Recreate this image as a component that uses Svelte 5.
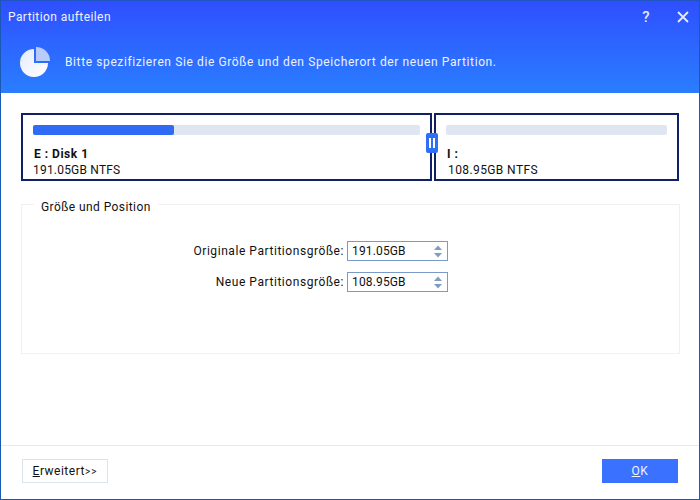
<script>
	const fields = [
		{ label: 'Originale Partitionsgröße:', value: '191.05GB' },
		{ label: 'Neue Partitionsgröße:', value: '108.95GB' }
	];
</script>

<div class="window">
	<header class="top">
		<div class="titlebar">
			<span class="title">Partition aufteilen</span>
			<div class="winbtns">
				<span class="help">?</span>
				<svg width="12" height="12" viewBox="0 0 12 12">
					<path d="M1 1L11 11M11 1L1 11" stroke="#e6ecff" stroke-width="1.8" fill="none" />
				</svg>
			</div>
		</div>
		<div class="intro">
			<svg class="pie" width="30" height="30" viewBox="0 0 30 30">
				<defs>
					<linearGradient id="pieg" x1="0" y1="0" x2="1" y2="1">
						<stop offset="0" stop-color="#e4ebfd" />
						<stop offset="1" stop-color="#ffffff" />
					</linearGradient>
				</defs>
				<path d="M14 2A14 14 0 1 0 28 16H14Z" fill="url(#pieg)" />
				<path d="M16 0A14 14 0 0 1 30 14H16Z" fill="#b9cbfb" />
			</svg>
			<span>Bitte spezifizieren Sie die Größe und den Speicherort der neuen Partition.</span>
		</div>
	</header>

	<main class="body">
		<div class="disks">
			<div class="part left">
				<div class="bar"><div class="fill"></div></div>
				<div class="name">E : Disk 1</div>
				<div class="size">191.05GB NTFS</div>
			</div>
			<div class="part right">
				<div class="bar"></div>
				<div class="name">I :</div>
				<div class="size">108.95GB NTFS</div>
			</div>
			<div class="handle"><i></i><i></i></div>
		</div>

		<section class="group">
			<span class="legend">Größe und Position</span>
			{#each fields as f}
				<div class="row">
					<span class="label">{f.label}</span>
					<div class="spin">
						<span>{f.value}</span>
						<svg width="8" height="13" viewBox="0 0 8 13">
							<path d="M4 0.5L8 5H0Z" fill="#7f9cc4" />
							<path d="M4 12.5L8 8H0Z" fill="#7f9cc4" />
						</svg>
					</div>
				</div>
			{/each}
		</section>
	</main>

	<footer class="foot">
		<button class="adv"><u>E</u>rweitert<small>&gt;&gt;</small></button>
		<button class="ok"><u>O</u>K</button>
	</footer>
</div>

<style>
:global(body){
	margin:0;
}

.window{
	width:700px;
	height:500px;
	box-sizing:border-box;
	border:1px solid #1b58b4;
	border-top-color:#1f55c0;
	display:flex;
	flex-direction:column;
	background:white;
	font-family:Roboto,"Liberation Sans",sans-serif;
	font-size:12px;
	letter-spacing:.5px;
	color:#111;
}

.top{
	height:92px;
	background:linear-gradient(to bottom,#2f4fff,#2a7eff);
	color:#eef2ff;
	flex:none;
}

.titlebar{
	height:32px;
	display:flex;
	align-items:center;
	justify-content:space-between;
	padding:0 10px 0 7px;
}

.title{
	letter-spacing:.42px;
}

.winbtns{
	display:flex;
	align-items:center;
	gap:27px;
}

.help{
	font-size:15px;
	font-weight:500;
	color:#e6ecff;
}

.intro{
	display:flex;
	align-items:center;
	gap:15px;
	padding:0 0 0 19px;
	height:30px;
	margin-top:14px;
	letter-spacing:.61px;
}

.body{
	flex:1;
	padding:20px 19px 0 20px;
}

.disks{
	position:relative;
	display:flex;
	gap:2px;
	height:68px;
}

.part{
	box-sizing:border-box;
	border:2px solid #0f2066;
	padding:10px 10px 0;
}

.left{ width:411px; }
.right{ width:245px; }

.bar{
	height:10px;
	border-radius:2px;
	background:#e0e6f1;
	margin-bottom:11px;
}

.fill{
	width:141px;
	height:10px;
	border-radius:2px;
	background:#2f6bf5;
}

.name{
	font-weight:700;
	line-height:16px;
	padding-left:1px;
}

.size{
	line-height:17px;
	letter-spacing:.2px;
}

.right .size{
	padding-left:2px;
	letter-spacing:.4px;
}

.handle{
	position:absolute;
	left:405px;
	top:20px;
	width:12px;
	height:20px;
	border-radius:2px;
	background:#2f6ff8;
	display:flex;
	align-items:center;
	justify-content:center;
	gap:2px;
}

.handle i{
	width:2px;
	height:10px;
	background:white;
}

.group{
	position:relative;
	box-sizing:border-box;
	width:659px;
	height:150px;
	margin-top:23px;
	border:1px solid #f0f0f0;
	padding-top:36px;
}

.legend{
	position:absolute;
	left:12px;
	top:-6px;
	padding:0 7px;
	background:white;
	line-height:16px;
	letter-spacing:.42px;
}

.row{
	display:flex;
	align-items:center;
	justify-content:flex-end;
	gap:3px;
	width:426px;
	height:20px;
	margin-bottom:11px;
}

.label{
	letter-spacing:.56px;
}

.spin{
	box-sizing:border-box;
	width:101px;
	height:20px;
	border:1px solid #7a9bc9;
	display:flex;
	align-items:center;
	justify-content:space-between;
	padding:0 5px 0 4px;
	letter-spacing:.15px;
}

.foot{
	flex:none;
	box-sizing:border-box;
	height:54px;
	border-top:1px solid #e9e9f1;
	display:flex;
	align-items:flex-start;
	justify-content:space-between;
	padding:13px 21px 0 21px;
}

.foot button{
	height:24px;
	font:inherit;
	letter-spacing:inherit;
	padding:0;
}

.adv{
	width:86px;
	background:white;
	border:1px solid #dde3ed;
	color:#111;
}

.adv small{
	font-size:10px;
	letter-spacing:1px;
}

.ok{
	width:76px;
	background:#3a72ff;
	border:none;
	color:#eef2ff;
}
</style>
